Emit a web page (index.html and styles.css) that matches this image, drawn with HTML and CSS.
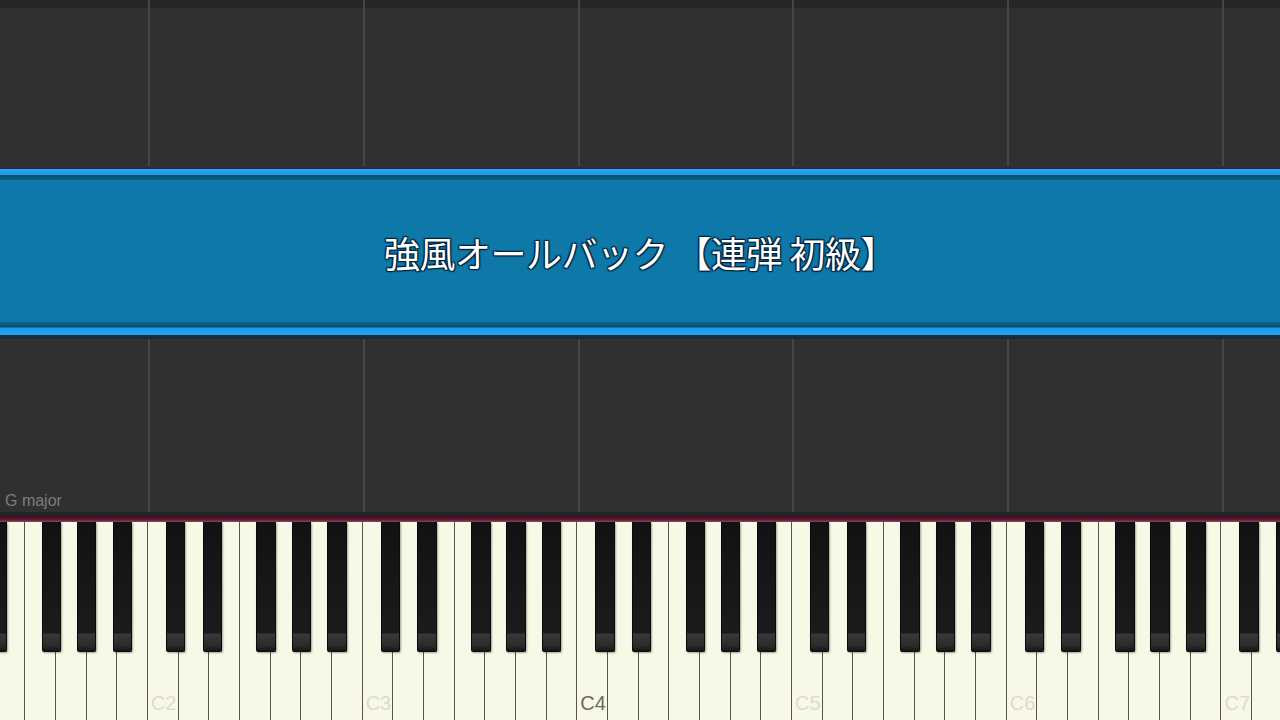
FILE: index.html
```html
<!DOCTYPE html>
<html lang="ja">
<head>
<meta charset="utf-8">
<title>強風オールバック 【連弾 初級】</title>
<link rel="stylesheet" href="styles.css">
</head>
<body>
<div class="screen">
  <div class="roll">
    <div class="upper"></div>
    <div class="banner">
      <div class="banner-edge top"></div>
      <div class="banner-body"><span class="title">強風オールバック 【連弾 初級】</span></div>
      <div class="banner-edge bottom"></div>
    </div>
    <div class="lower"><span class="key-sig">G major</span></div>
  </div>
  <div class="piano">
    <div class="piano-rail"></div>
    <div class="keys">
      <div class="wk"><div class="bk ds"></div></div>
      <div class="wk"></div>
      <div class="wk"><div class="bk fs"></div></div>
      <div class="wk"><div class="bk gs"></div></div>
      <div class="wk"><div class="bk as"></div></div>
      <div class="wk"></div>

      <div class="wk"><span class="lbl">C2</span><div class="bk cs"></div></div>
      <div class="wk"><div class="bk ds"></div></div>
      <div class="wk"></div>
      <div class="wk"><div class="bk fs"></div></div>
      <div class="wk"><div class="bk gs"></div></div>
      <div class="wk"><div class="bk as"></div></div>
      <div class="wk"></div>

      <div class="wk"><span class="lbl">C3</span><div class="bk cs"></div></div>
      <div class="wk"><div class="bk ds"></div></div>
      <div class="wk"></div>
      <div class="wk"><div class="bk fs"></div></div>
      <div class="wk"><div class="bk gs"></div></div>
      <div class="wk"><div class="bk as"></div></div>
      <div class="wk"></div>

      <div class="wk"><span class="lbl mid">C4</span><div class="bk cs"></div></div>
      <div class="wk"><div class="bk ds"></div></div>
      <div class="wk"></div>
      <div class="wk"><div class="bk fs"></div></div>
      <div class="wk"><div class="bk gs"></div></div>
      <div class="wk"><div class="bk as"></div></div>
      <div class="wk"></div>

      <div class="wk"><span class="lbl">C5</span><div class="bk cs"></div></div>
      <div class="wk"><div class="bk ds"></div></div>
      <div class="wk"></div>
      <div class="wk"><div class="bk fs"></div></div>
      <div class="wk"><div class="bk gs"></div></div>
      <div class="wk"><div class="bk as"></div></div>
      <div class="wk"></div>

      <div class="wk"><span class="lbl">C6</span><div class="bk cs"></div></div>
      <div class="wk"><div class="bk ds"></div></div>
      <div class="wk"></div>
      <div class="wk"><div class="bk fs"></div></div>
      <div class="wk"><div class="bk gs"></div></div>
      <div class="wk"><div class="bk as"></div></div>
      <div class="wk"></div>

      <div class="wk"><span class="lbl">C7</span><div class="bk cs"></div></div>
      <div class="wk"><div class="bk ds"></div></div>
      <div class="wk"></div>
    </div>
  </div>
</div>
</body>
</html>
```
FILE: styles.css
```css
html, body {
  margin: 0;
  padding: 0;
  background: #303030;
}
.screen {
  width: 1280px;
  height: 720px;
  overflow: hidden;
  display: flex;
  flex-direction: column;
  font-family: "Liberation Sans", "Noto Sans CJK JP", sans-serif;
}
.roll {
  height: 512px;
  display: flex;
  flex-direction: column;
  background:
    repeating-linear-gradient(90deg, transparent 0 147px, #464646 147px 149px, transparent 149px 214.8px),
    linear-gradient(#262626, #262626) top left / 100% 8px no-repeat;
  background-color: #303030;
  background-position: 1px 0, 0 0;
}
.upper {
  height: 166px;
}
.banner {
  height: 173px;
  display: flex;
  flex-direction: column;
}
.banner-edge.top {
  height: 14px;
  background: linear-gradient(#3a2a32 0, #2a2c3a 3px, #2aa6f2 3px, #1e98e6 9px, #0c4f70 9px, #0d5f86 14px);
}
.banner-edge.bottom {
  height: 17px;
  background: linear-gradient(#0d6890 0, #0a4a68 5px, #1e9ce8 6px, #23a2ee 13px, #16303f 13px, #1f2a32 17px);
}
.banner-body {
  flex: 1;
  background: #0e79a9;
  display: flex;
  align-items: center;
  justify-content: center;
}
.title {
  font-family: "Noto Sans CJK JP", sans-serif;
  font-size: 36px;
  color: #ffffff;
  letter-spacing: -0.5px;
  padding-top: 2px;
  text-shadow:
    0 0 2px #02203a,
    1px 1px 1px #02203a,
    -1px -1px 1px #02203a,
    1px -1px 1px #02203a,
    -1px 1px 1px #02203a;
}
.lower {
  flex: 1;
  display: flex;
  align-items: flex-end;
  padding: 0 0 3px 5px;
}
.key-sig {
  font-size: 16px;
  line-height: 16px;
  color: #7c7c7c;
}
.piano {
  flex: 1;
  display: flex;
  flex-direction: column;
  border-top: 4px solid #242424;
}
.piano-rail {
  height: 6px;
  background: linear-gradient(#3a0c1c, #5a1a32 60%, #8a4a5c);
}
.keys {
  flex: 1;
  display: flex;
  margin-left: -36.12px;
}
.wk {
  position: relative;
  flex: 0 0 30.686px;
  box-sizing: border-box;
  background: #f8f8e7;
  border-right: 1px solid #56564a;
  display: flex;
  align-items: flex-end;
  padding: 0 0 7px 3px;
}
.lbl {
  font-size: 20px;
  line-height: 20px;
  color: #dcdccb;
}
.lbl.mid {
  color: #6a6a64;
}
.bk {
  position: absolute;
  z-index: 2;
  top: 0;
  width: 19.5px;
  height: 130px;
  box-sizing: border-box;
  border: 1px solid #0b0b0b;
  border-top: none;
  border-radius: 0 0 2px 2px;
  background: linear-gradient(#121212 0, #1b1b1b 86%, #383838 87%, #2a2a2a 96%, #141414 100%);
  box-shadow: 1px 1px 2px rgba(0, 0, 0, 0.35);
}
.bk.cs { left: 17.94px; }
.bk.ds { left: 23.94px; }
.bk.fs { left: 16.44px; }
.bk.gs { left: 20.94px; }
.bk.as { left: 25.94px; }
```
